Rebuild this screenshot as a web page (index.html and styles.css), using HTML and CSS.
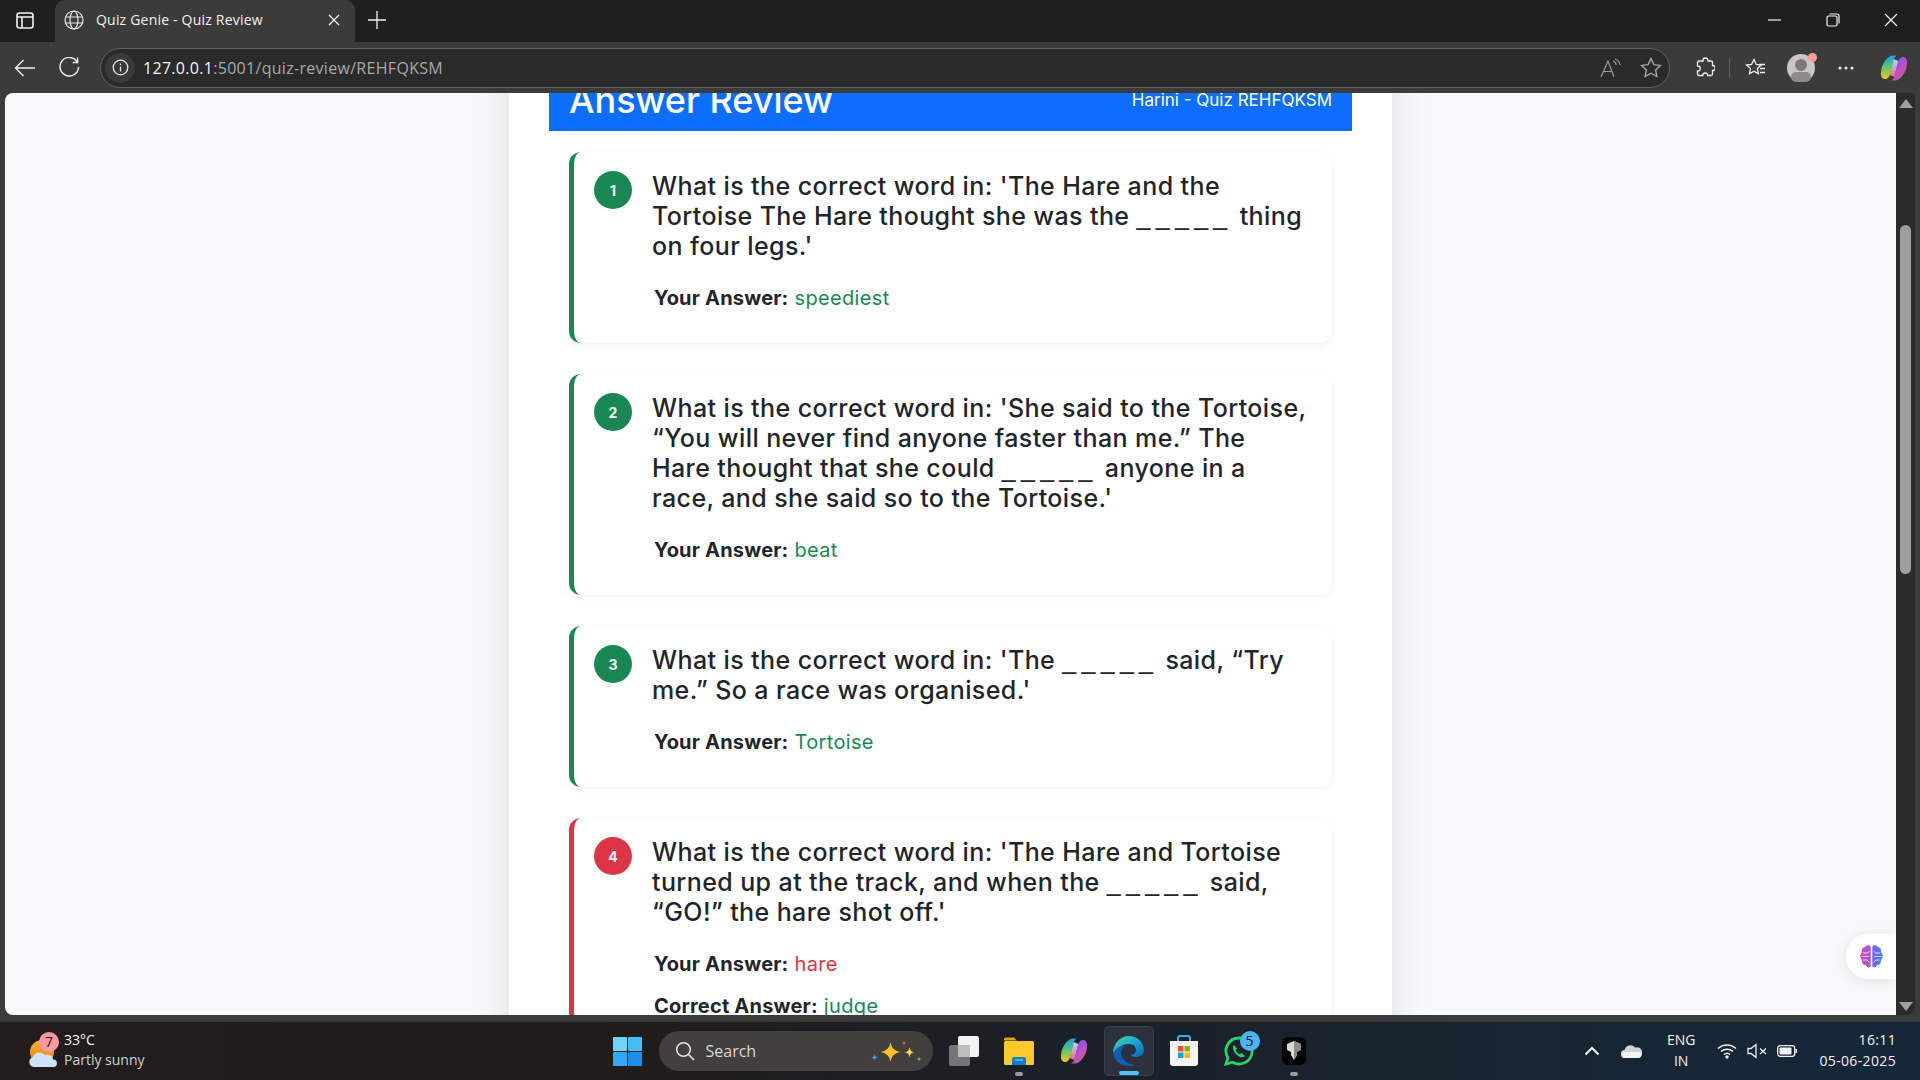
FILE: index.html
```html
<!DOCTYPE html>
<html lang="en">
<head>
    <meta charset="UTF-8">
    <meta name="viewport" content="width=device-width, initial-scale=1.0">
    <title>Quiz Genie - Quiz Review</title>
    <link rel="stylesheet" href="styles.css">
</head>
<body>
    <div class="tabstrip">
        <svg class="sidebar-icon" width="18" height="18" viewBox="0 0 18 18" fill="none" stroke="#f2f2f2" stroke-width="1.6"><rect x="1" y="2" width="16" height="15" rx="2.5"/><path d="M1 6h16M6 6v11"/></svg>
        <div class="tab">
            <svg width="20" height="20" viewBox="0 0 20 20" fill="none" stroke="#e6e6e6" stroke-width="1.2"><circle cx="10" cy="10" r="9"/><ellipse cx="10" cy="10" rx="4" ry="9"/><path d="M1.6 7h16.8M1.6 13h16.8"/></svg>
            <span class="tab-title">Quiz Genie - Quiz Review</span>
            <svg width="12" height="12" viewBox="0 0 12 12" stroke="#f2f2f2" stroke-width="1.3"><path d="M1 1l10 10M11 1L1 11"/></svg>
        </div>
        <svg class="new-tab" width="18" height="18" viewBox="0 0 18 18" stroke="#f2f2f2" stroke-width="1.3"><path d="M9 0v18M0 9h18"/></svg>
        <div class="window-controls">
            <svg width="14" height="14" viewBox="0 0 14 14" stroke="#f2f2f2" stroke-width="1.2"><path d="M0 7h13"/></svg>
            <svg width="14" height="14" viewBox="0 0 14 14" fill="none" stroke="#f2f2f2" stroke-width="1.2"><rect x="1" y="3" width="10" height="10" rx="1.5"/><path d="M3.5 1h7.5a2 2 0 0 1 2 2v7.5"/></svg>
            <svg width="14" height="14" viewBox="0 0 14 14" stroke="#f2f2f2" stroke-width="1.2"><path d="M1 1l12 12M13 1L1 13"/></svg>
        </div>
    </div>

    <div class="toolbar">
        <svg class="nav-icon" width="22" height="18" viewBox="0 0 22 18" fill="none" stroke="#f2f2f2" stroke-width="1.4"><path d="M21 9H1.5M9.5 1L1.500 9l8 8"/></svg>
        <svg class="nav-icon" width="21" height="21" viewBox="0 0 21 21" fill="none" stroke="#f2f2f2" stroke-width="1.4"><path d="M18 4.500A9.300 9.300 0 1 0 19.600 10"/><path d="M18.600 .5v5h-5"/></svg>
        <div class="omnibox">
            <div class="info-badge">
                <svg width="17" height="17" viewBox="0 0 17 17" fill="none" stroke="#e8e8e8" stroke-width="1.3"><circle cx="8.500" cy="8.500" r="7.300"/><path d="M8.500 7.500v5M8.500 4.500V6"/></svg>
            </div>
            <span class="url"><span class="url-host">127.0.0.1</span>:5001/quiz-review/REHFQKSM</span>
            <svg class="read-icon" width="22" height="20" viewBox="0 0 22 20" fill="none" stroke="#9a9a9a" stroke-width="1.2"><path d="M1 19L8 3l6 16M3.500 13.500h9"/><path d="M13 3c2 .5 3 2 3.200 4M15 1c3 .8 4.600 3 5 6"/></svg>
            <svg width="22" height="21" viewBox="0 0 22 21" fill="none" stroke="#a8a8a8" stroke-width="1.4"><path d="M11 1.500l2.900 6.100 6.600.8-4.900 4.500 1.300 6.600-5.900-3.300-5.900 3.300 1.300-6.600L1.500 8.400l6.600-.8z"/></svg>
        </div>
        <div class="toolbar-actions">
            <svg width="20" height="21" viewBox="0 0 20 21" fill="none" stroke="#efefef" stroke-width="1.3"><path d="M8 3.500a2.500 2.500 0 0 1 5 0V4h3a1.500 1.500 0 0 1 1.500 1.500v3h.2a2.500 2.500 0 0 1 0 5h-.2V17a1.500 1.500 0 0 1-1.500 1.500h-3.200a2.500 2.500 0 0 0-5 0H4A1.500 1.500 0 0 1 2.500 17v-3h.3a2.500 2.500 0 0 0 0-5h-.3V5.500A1.500 1.500 0 0 1 4 4h4z"/></svg>
            <span class="separator"></span>
            <svg width="21" height="20" viewBox="0 0 21 20" fill="none" stroke="#efefef" stroke-width="1.3"><path d="M9 1.500l2.200 5 5 .5-3.800 3.500 1 5.200L9 13.200l-4.500 2.600 1-5.200L1.500 7l5-.5z"/><path d="M14.500 6.500H20M15 10.500h5M15 14.500h5"/></svg>
            <div class="avatar">
                <span class="avatar-head"></span>
                <span class="avatar-body"></span>
                <span class="avatar-dot"></span>
            </div>
            <svg class="more-icon" width="16" height="4" viewBox="0 0 16 4" fill="#efefef"><circle cx="2" cy="2" r="1.500"/><circle cx="8" cy="2" r="1.500"/><circle cx="14" cy="2" r="1.500"/></svg>
            <svg width="28" height="28" viewBox="0 0 28 28">
                <defs>
                    <linearGradient id="copA" x1="0" y1="0" x2="0" y2="1"><stop offset="0" stop-color="#1f9df0"/><stop offset=".5" stop-color="#58c96f"/><stop offset="1" stop-color="#f5c518"/></linearGradient>
                    <linearGradient id="copB" x1="0" y1="0" x2="1" y2="1"><stop offset="0" stop-color="#3b62f0"/><stop offset=".5" stop-color="#b34ee0"/><stop offset="1" stop-color="#f0642f"/></linearGradient>
                    <linearGradient id="copM" x1="0" y1="0" x2="0" y2="1"><stop offset="0" stop-color="#a9dcff"/><stop offset="1" stop-color="#f76b6b"/></linearGradient>
                </defs>
                <path d="M13.500 5L18.500 7 14.500 23 9.500 21z" fill="url(#copM)"/>
                <path d="M9 3c1.500-1.500 3-1.500 5-1.500h3c-2 1-3 2.500-3.500 4.500L10 20c-.7 3-2.500 5-5 5-3 0-4.500-3-4-7C1.500 13 3.500 7 9 3z" fill="url(#copA)"/>
                <path d="M19 25c-1.500 1.500-3 1.500-5 1.500h-3c2-1 3-2.500 3.500-4.500L18 8c.7-3 2.500-5 5-5 3 0 4.500 3 4 7-.5 5-2.500 11-8 15z" fill="url(#copB)"/>
            </svg>
        </div>
    </div>

    <div class="browser-view">
        <div class="page">
            <div class="review-panel">
                <header class="review-header">
                    <h1>Answer Review</h1>
                    <span class="review-meta">Harini - Quiz REHFQKSM</span>
                </header>

                <div class="question-card correct">
                    <div class="question-row">
                        <span class="question-num">1</span>
                        <p class="question-text">What is the correct word in: 'The Hare and the<br>Tortoise The Hare thought she was the <span class="blank">_____</span> thing<br>on four legs.'</p>
                    </div>
                    <p class="answer-line"><b>Your Answer:</b> <span class="answer-ok">speediest</span></p>
                </div>

                <div class="question-card correct">
                    <div class="question-row">
                        <span class="question-num">2</span>
                        <p class="question-text">What is the correct word in: 'She said to the Tortoise,<br>“You will never find anyone faster than me.” The<br>Hare thought that she could <span class="blank">_____</span> anyone in a<br>race, and she said so to the Tortoise.'</p>
                    </div>
                    <p class="answer-line"><b>Your Answer:</b> <span class="answer-ok">beat</span></p>
                </div>

                <div class="question-card correct">
                    <div class="question-row">
                        <span class="question-num">3</span>
                        <p class="question-text">What is the correct word in: 'The <span class="blank">_____</span> said, “Try<br>me.” So a race was organised.'</p>
                    </div>
                    <p class="answer-line"><b>Your Answer:</b> <span class="answer-ok">Tortoise</span></p>
                </div>

                <div class="question-card wrong">
                    <div class="question-row">
                        <span class="question-num">4</span>
                        <p class="question-text">What is the correct word in: 'The Hare and Tortoise<br>turned up at the track, and when the <span class="blank">_____</span> said,<br>“GO!” the hare shot off.'</p>
                    </div>
                    <p class="answer-line"><b>Your Answer:</b> <span class="answer-bad">hare</span></p>
                    <p class="answer-line"><b>Correct Answer:</b> <span class="answer-ok">judge</span></p>
                </div>
            </div>

            <div class="assistant-pill">
                <svg width="25" height="25" viewBox="0 0 25 25">
                    <defs><linearGradient id="brain" x1="0" y1="0" x2="1" y2="0"><stop offset="0" stop-color="#ee3fb0"/><stop offset=".5" stop-color="#8a5cf0"/><stop offset="1" stop-color="#3b82f6"/></linearGradient></defs>
                    <path d="M11.700 2.500C10.500.5 7 .8 6.200 3 3.500 3.200 2.200 6 3.200 8.200.6 9.800.6 14.500 3.200 16 2.500 19 4.800 21.500 7 21.200c1 2.800 4.700 2.800 4.700.5zM13.300 2.500c1.200-2 4.700-1.700 5.500.5 2.700.2 4 3 3 5.200 2.600 1.600 2.600 6.300 0 7.800.7 3-1.600 5.500-3.800 5.200-1 2.800-4.700 2.800-4.700.5z" fill="url(#brain)"/>
                    <path d="M4 9h4.500l2-2M4.500 16H8l2.500 2.500M21 9h-4.500l-2-2M20.500 16H17l-2.500 2.500M2.500 12.500h7M22.500 12.500h-7" stroke="#fff" stroke-width=".8" fill="none"/>
                </svg>
            </div>
        </div>
        <div class="scrollbar">
            <span class="arrow-up"></span>
            <div class="scroll-track"><span class="scroll-thumb"></span></div>
            <span class="arrow-down"></span>
        </div>
    </div>

    <footer class="taskbar">
        <div class="task-left">
            <div class="weather-icon">
                <svg width="30" height="36" viewBox="0 0 30 36">
                    <defs><linearGradient id="sun" x1="0" y1="0" x2="0" y2="1"><stop offset="0" stop-color="#f9b233"/><stop offset="1" stop-color="#ee7d11"/></linearGradient></defs>
                    <circle cx="14" cy="19" r="12" fill="url(#sun)"/>
                    <path d="M6 34a5 5 0 0 1-1-9.800A7 7 0 0 1 17 22a5.500 5.500 0 0 1 8 4.500 3.800 3.800 0 0 1 1 7.500z" fill="#cfe2fb"/>
                </svg>
                <span class="weather-badge">7</span>
            </div>
            <div class="weather-text">
                <span>33°C</span>
                <span class="weather-sub">Partly sunny</span>
            </div>
        </div>

        <div class="task-center">
            <svg width="29" height="29" viewBox="0 0 29 29"><rect width="14" height="14" rx="1" fill="#6fd6fb"/><rect x="15" width="14" height="14" rx="1" fill="#45bdf7"/><rect y="15" width="14" height="14" rx="1" fill="#2fa9f4"/><rect x="15" y="15" width="14" height="14" rx="1" fill="#1b8fea"/></svg>
            <div class="search-box">
                <svg width="20" height="20" viewBox="0 0 20 20" fill="none" stroke="#e6e6e6" stroke-width="1.6"><circle cx="8.500" cy="8.500" r="6.800"/><path d="M13.500 13.500L19 19"/></svg>
                <span class="search-label">Search</span>
                <svg width="50" height="30" viewBox="0 0 50 30">
                    <path d="M19.500 6c1.200 6 3.500 8.500 10 10-6.500 1.500-8.800 4-10 10-1.200-6-3.500-8.500-10-10 6.500-1.500 8.800-4 10-10z" fill="#fbbf24"/>
                    <path d="M38.500 11c.6 3.500 1.700 4.600 4.800 5.200-3.100.6-4.200 1.700-4.800 5.200-.6-3.500-1.700-4.600-4.800-5.200 3.100-.6 4.200-1.700 4.800-5.200z" fill="#fcd34d"/>
                    <path d="M3.500 18c.3 2.400 1 3.100 3.300 3.500-2.300.4-3 1.100-3.300 3.500-.3-2.400-1-3.100-3.300-3.500 2.300-.4 3-1.100 3.300-3.500z" fill="#38a6f0"/>
                    <circle cx="33" cy="7" r="1.500" fill="#e2603a"/><circle cx="48" cy="23" r="1.500" fill="#7cb342"/>
                </svg>
            </div>
            <div class="task-item">
                <svg width="30" height="30" viewBox="0 0 30 30"><rect x="9" width="21" height="21" rx="2" fill="#f2f2f2"/><rect y="9" width="21" height="21" rx="2" fill="#7d7d7d" fill-opacity=".9"/><rect x="9" y="9" width="12" height="12" fill="#bdbdbd"/></svg>
            </div>
            <div class="task-item running">
                <svg width="30" height="30" viewBox="0 0 30 30"><path d="M0 3a1.500 1.500 0 0 1 1.500-1.500H10l3 3H0z" fill="#e0a30c"/><rect y="5" width="30" height="24" rx="1.500" fill="#fbc92c"/><path d="M8 23a2 2 0 0 1 2-2h10a2 2 0 0 1 2 2v6H8z" fill="#0f7dd0"/><path d="M11 24h8" stroke="#9bd3f7" stroke-width="1"/></svg>
            </div>
            <div class="task-item">
                <svg width="28" height="28" viewBox="0 0 28 28">
                    <defs>
                        <linearGradient id="copC" x1="0" y1="0" x2="0" y2="1"><stop offset="0" stop-color="#1f9df0"/><stop offset=".5" stop-color="#58c96f"/><stop offset="1" stop-color="#f5c518"/></linearGradient>
                        <linearGradient id="copD" x1="0" y1="0" x2="1" y2="1"><stop offset="0" stop-color="#3b62f0"/><stop offset=".5" stop-color="#b34ee0"/><stop offset="1" stop-color="#f0642f"/></linearGradient>
                        <linearGradient id="copN" x1="0" y1="0" x2="0" y2="1"><stop offset="0" stop-color="#a9dcff"/><stop offset="1" stop-color="#f76b6b"/></linearGradient>
                    </defs>
                    <path d="M13.500 5L18.500 7 14.500 23 9.500 21z" fill="url(#copN)"/>
                    <path d="M9 3c1.500-1.500 3-1.500 5-1.500h3c-2 1-3 2.500-3.500 4.500L10 20c-.7 3-2.500 5-5 5-3 0-4.500-3-4-7C1.500 13 3.500 7 9 3z" fill="url(#copC)"/>
                    <path d="M19 25c-1.500 1.500-3 1.500-5 1.500h-3c2-1 3-2.500 3.500-4.500L18 8c.7-3 2.500-5 5-5 3 0 4.500 3 4 7-.5 5-2.500 11-8 15z" fill="url(#copD)"/>
                </svg>
            </div>
            <div class="task-item active">
                <svg width="31" height="31" viewBox="0 0 31 31">
                    <defs><linearGradient id="edge" x1="0" y1="0" x2="1" y2="1"><stop offset="0" stop-color="#45d9a0"/><stop offset=".5" stop-color="#19a5d8"/><stop offset="1" stop-color="#0b62b8"/></linearGradient></defs>
                    <path d="M15.500 0C24 0 31 6 31 14c0 5-4 7-8 7-3 0-5-1-5-2.500 3 .5 5-2 5-4.500 0-4-3.500-6-7.500-6C9 8 3 13 0 17 0 8 7 0 15.500 0z" fill="url(#edge)"/>
                    <path d="M0 17c3-5 8-8 12-7-3 2-4 4-4 7 0 7 8 12 14 11.500A15.500 15.500 0 0 1 0 17z" fill="#0d5fb5"/>
                </svg>
                <span class="active-bar"></span>
            </div>
            <div class="task-item">
                <svg width="30" height="32" viewBox="0 0 30 32"><path d="M9 7V3a2 2 0 0 1 2-2h8a2 2 0 0 1 2 2v4" fill="none" stroke="#29b6f6" stroke-width="2"/><path d="M1 6h28v22a3 3 0 0 1-3 3H4a3 3 0 0 1-3-3z" fill="#f4f4f4"/><rect x="9" y="11" width="5.500" height="5.500" fill="#f25022"/><rect x="15.500" y="11" width="5.500" height="5.500" fill="#7fba00"/><rect x="9" y="17.500" width="5.500" height="5.500" fill="#00a4ef"/><rect x="15.500" y="17.500" width="5.500" height="5.500" fill="#ffb900"/></svg>
            </div>
            <div class="task-item">
                <svg width="30" height="30" viewBox="0 0 30 30"><path d="M15 2a13 13 0 0 0-11 20L2 28l6.500-1.800A13 13 0 1 0 15 2z" fill="none" stroke="#25d366" stroke-width="2.800"/><path d="M10 9c-2 2-1 6 2.500 9.500S19 22 21 20l-3.500-3-1.800 1.200c-1.500-.5-3.500-2.500-4-4l1.300-1.700z" fill="#25d366"/></svg>
                <span class="whatsapp-badge">5</span>
            </div>
            <div class="task-item running">
                <svg width="24" height="28" viewBox="0 0 24 28"><rect width="24" height="28" rx="6" fill="#050505"/><path d="M5 7l7-3 7 3v6l-4 2v3l-3 5-3-5v-3l-4-2z" fill="#d8d8d8"/><path d="M12 4l7 3v6l-4 2v3l-3 5z" fill="#8a8a8a"/></svg>
            </div>
        </div>

        <div class="task-right">
            <svg width="16" height="10" viewBox="0 0 16 10" fill="none" stroke="#f2f2f2" stroke-width="2"><path d="M1.500 8.500L8 2l6.500 6.500"/></svg>
            <svg class="tray-cloud" width="21" height="14" viewBox="0 0 21 14"><path d="M4 14a4 4 0 0 1-.5-8A6 6 0 0 1 14 3.500 5 5 0 0 1 17.500 14z" fill="#d0d4d8"/><path d="M4 14a3 3 0 0 1 0-6h13a3 3 0 0 1 .5 6z" fill="#f4f4f4"/></svg>
            <div class="lang"><span>ENG</span><span>IN</span></div>
            <svg width="20" height="16" viewBox="0 0 20 16" fill="none" stroke="#f2f2f2" stroke-width="1.500"><path d="M1 5.500a13 13 0 0 1 18 0M4 8.500a9 9 0 0 1 12 0M7 11.500a4.500 4.500 0 0 1 6 0"/><circle cx="10" cy="14" r="1" fill="#f2f2f2"/></svg>
            <svg width="20" height="16" viewBox="0 0 20 16" fill="none" stroke="#f2f2f2" stroke-width="1.300"><path d="M1 5.500v5h3l5 4V1.500l-5 4z"/><path d="M13 5.500l6 5.500M19 5.500L13 11"/></svg>
            <svg width="20" height="12" viewBox="0 0 20 12"><rect x=".7" y=".7" width="17" height="10.600" rx="2.500" fill="none" stroke="#f2f2f2" stroke-width="1.300"/><rect x="2.500" y="2.500" width="12" height="7" rx="1" fill="#f2f2f2"/><rect x="18.500" y="4" width="1.500" height="4" fill="#f2f2f2"/></svg>
            <div class="clock"><span>16:11</span><span>05-06-2025</span></div>
        </div>
    </footer>
</body>
</html>
```

FILE: styles.css
```css
* {
    box-sizing: border-box;
}

body {
    margin: 0;
    height: 100vh;
    overflow: hidden;
    display: flex;
    flex-direction: column;
    background: #3b3b3b;
    font-family: "Open Sans", "Noto Sans", sans-serif;
    color: #f2f2f2;
}

/* browser chrome */
.tabstrip {
    height: 42px;
    flex-shrink: 0;
    background: #1f1f1f;
    display: flex;
    align-items: center;
    padding: 0 0 2px 16px;
}

.sidebar-icon {
    margin-right: 21px;
}

.tab {
    width: 300px;
    height: 42px;
    align-self: flex-start;
    background: #3b3b3b;
    border-radius: 10px 10px 0 0;
    display: flex;
    align-items: center;
    padding: 0 15px 3px 9px;
}

.tab-title {
    flex: 1;
    margin-left: 12px;
    font-size: 14px;
    letter-spacing: .2px;
}

.new-tab {
    margin-left: 13px;
}

.window-controls {
    margin-left: auto;
    display: flex;
    gap: 44px;
    padding-right: 22px;
}

.toolbar {
    height: 50px;
    flex-shrink: 0;
    display: flex;
    align-items: center;
    padding: 1px 0 0 14px;
    background: #3b3b3b;
}

.nav-icon {
    margin-right: 23px;
}

.omnibox {
    width: 1570px;
    height: 40px;
    margin-left: -3px;
    border: 1px solid #5f5f5f;
    border-radius: 20px;
    background: #2a2a2a;
    display: flex;
    align-items: center;
    padding: 0 7px 0 4px;
    gap: 18px;
}

.info-badge {
    width: 30px;
    height: 30px;
    border-radius: 50%;
    background: #3a3a3a;
    display: flex;
    align-items: center;
    justify-content: center;
    margin-right: -10px;
}

.url {
    flex: 1;
    font-size: 16px;
    color: #a9a9a9;
    letter-spacing: .3px;
}

.url-host {
    color: #f4f4f4;
}

.toolbar-actions {
    flex: 1;
    display: flex;
    align-items: center;
    padding-left: 25px;
    gap: 14px;
}

.separator {
    width: 1px;
    height: 20px;
    margin-right: 1px;
    background: #5d5d5d;
}

.avatar {
    position: relative;
    width: 28px;
    height: 28px;
    border-radius: 50%;
    background: #c9c6c3;
    margin: 0 9px 0 7px;
}

.more-icon {
    margin-right: 12px;
}

.avatar-head {
    position: absolute;
    top: 5px;
    left: 8px;
    width: 12px;
    height: 12px;
    border-radius: 50%;
    background: #7d7a78;
}

.avatar-body {
    position: absolute;
    bottom: 0;
    left: 4px;
    width: 20px;
    height: 10px;
    border-radius: 10px;
    background: #8e8b89;
}

.avatar-dot {
    position: absolute;
    top: -1px;
    right: -2px;
    width: 9px;
    height: 9px;
    border-radius: 50%;
    background: #ff9a9a;
}

/* page */
.browser-view {
    flex: 1;
    min-height: 0;
    display: flex;
    padding: 1px 0 0 5px;
    margin-bottom: 6px;
    background: #3b3b3b;
}

.page {
    position: relative;
    flex: 1;
    min-width: 0;
    overflow: hidden;
    background: #f8f9fa;
    border-radius: 8px 0 0 8px;
}

.review-panel {
    width: 883px;
    margin: -59px auto 0;
    padding: 0 40px;
    background: #fff;
    box-shadow: 0 0 40px rgba(0, 0, 0, .1);
    font-family: "Inter", "Liberation Sans", sans-serif;
    height: 1200px;
}

.review-header {
    height: 97px;
    background: #0d6efd;
    color: #fff;
    display: flex;
    justify-content: space-between;
    align-items: flex-start;
    padding: 46px 20px 0;
    margin-bottom: 21px;
}

.review-header h1 {
    margin: 0;
    font-size: 36px;
    font-weight: 500;
    line-height: 40px;
}

.review-meta {
    font-size: 17px;
    line-height: 52px;
    margin-top: -6px;
}

.question-card {
    margin: 0 20px 31px;
    padding: 19px 20px 30px 20px;
    background: #fff;
    border-left: 5px solid #198754;
    border-radius: 12px;
    box-shadow: 0 2px 6px rgba(0, 0, 0, .06);
}

.question-card.wrong {
    border-left-color: #dc3545;
}

.question-row {
    display: flex;
    gap: 20px;
}

.question-num {
    flex-shrink: 0;
    width: 38px;
    height: 38px;
    border-radius: 50%;
    background: #198754;
    color: #fff;
    font-size: 14px;
    font-weight: 700;
    display: flex;
    align-items: center;
    justify-content: center;
}

.wrong .question-num {
    background: #dc3545;
}

.question-text {
    margin: 0;
    font-size: 25px;
    font-weight: 500;
    line-height: 30px;
    letter-spacing: .4px;
    color: #212529;
    white-space: nowrap;
}

.blank {
    font-family: "Liberation Sans", sans-serif;
    font-weight: 400;
    letter-spacing: 5.300px;
}

.answer-line {
    margin: 22px 0 0 60px;
    font-size: 20px;
    line-height: 30px;
    letter-spacing: .35px;
    color: #212529;
    white-space: nowrap;
}

.answer-line + .answer-line {
    margin-top: 12px;
}

.answer-line b {
    font-weight: 700;
    letter-spacing: .2px;
}

.answer-ok {
    color: #198754;
}

.answer-bad {
    color: #dc3545;
}

.assistant-pill {
    position: absolute;
    right: 0;
    top: 841px;
    width: 50px;
    height: 45px;
    background: #fff;
    border-radius: 22px 0 0 22px;
    box-shadow: 0 2px 14px rgba(0, 0, 0, .1);
    display: flex;
    align-items: center;
    justify-content: center;
}

.scrollbar {
    width: 19px;
    display: flex;
    flex-direction: column;
    align-items: center;
    padding: 6px 0 4px;
    margin-right: 5px;
    background: #2b2b2b;
    border-radius: 0 0 8px 0;
}

.arrow-up {
    border: 7px solid transparent;
    border-top: 0;
    border-bottom: 9px solid #a0a0a0;
}

.arrow-down {
    border: 7px solid transparent;
    border-bottom: 0;
    border-top: 9px solid #a0a0a0;
}

.scroll-track {
    flex: 1;
    width: 100%;
    display: flex;
    justify-content: center;
    padding-top: 117px;
}

.scroll-thumb {
    width: 11px;
    height: 349px;
    border-radius: 6px;
    background: #9e9e9e;
}

/* taskbar */
.taskbar {
    height: 59px;
    flex-shrink: 0;
    display: grid;
    grid-template-columns: 1fr auto 1fr;
    align-items: center;
    background: linear-gradient(90deg, #221d1c 0%, #1f1c1c 35%, #1a222c 65%, #14283a 100%);
    border-top: 1px solid #34383c;
}

.task-left {
    display: flex;
    align-items: center;
    padding-left: 28px;
    gap: 8px;
}

.weather-icon {
    position: relative;
    width: 28px;
    height: 36px;
}

.weather-badge {
    position: absolute;
    top: -1px;
    right: -3px;
    width: 20px;
    height: 20px;
    border-radius: 50%;
    background: #ff9aa2;
    color: #1a1a1a;
    font-size: 14px;
    line-height: 20px;
    text-align: center;
}

.weather-text {
    display: flex;
    flex-direction: column;
    margin-bottom: 2px;
    font-size: 14px;
    line-height: 20px;
}

.weather-sub {
    color: #d0d0d0;
}

.task-center {
    display: flex;
    align-items: center;
    padding-left: 16px;
}

.search-box {
    width: 274px;
    height: 40px;
    margin: 0 6px 0 17px;
    padding: 0 12px 0 16px;
    border-radius: 20px;
    background: #423f3f;
    display: flex;
    align-items: center;
    gap: 11px;
}

.search-label {
    flex: 1;
    font-size: 16px;
    color: #d8d8d8;
}

.task-item {
    position: relative;
    width: 50px;
    height: 50px;
    margin-right: 5px;
    border-radius: 5px;
    display: flex;
    align-items: center;
    justify-content: center;
}

.task-item.active {
    background: #2c323b;
    border: 1px solid #384049;
}

.task-item.running::after {
    content: "";
    position: absolute;
    bottom: 0;
    left: 21px;
    width: 8px;
    height: 4px;
    border-radius: 2px;
    background: #9a9a9a;
}

.active-bar {
    position: absolute;
    bottom: 0;
    left: 14px;
    width: 20px;
    height: 4px;
    border-radius: 2px;
    background: #4fc3f7;
}

.whatsapp-badge {
    position: absolute;
    top: 5px;
    right: 4px;
    width: 20px;
    height: 20px;
    border-radius: 50%;
    background: #4db3f5;
    color: #10202c;
    font-size: 14px;
    line-height: 20px;
    text-align: center;
}

.task-right {
    display: flex;
    align-items: center;
    justify-content: flex-end;
    padding-right: 24px;
    gap: 10px;
}

.tray-cloud {
    margin: 0 15px 0 11px;
}

.lang,
.clock {
    display: flex;
    flex-direction: column;
    margin-bottom: 2px;
    font-size: 14px;
    line-height: 21px;
}

.lang {
    align-items: center;
    margin-right: 12px;
}

.clock {
    align-items: flex-end;
    margin-left: 12px;
    letter-spacing: .35px;
}
```
